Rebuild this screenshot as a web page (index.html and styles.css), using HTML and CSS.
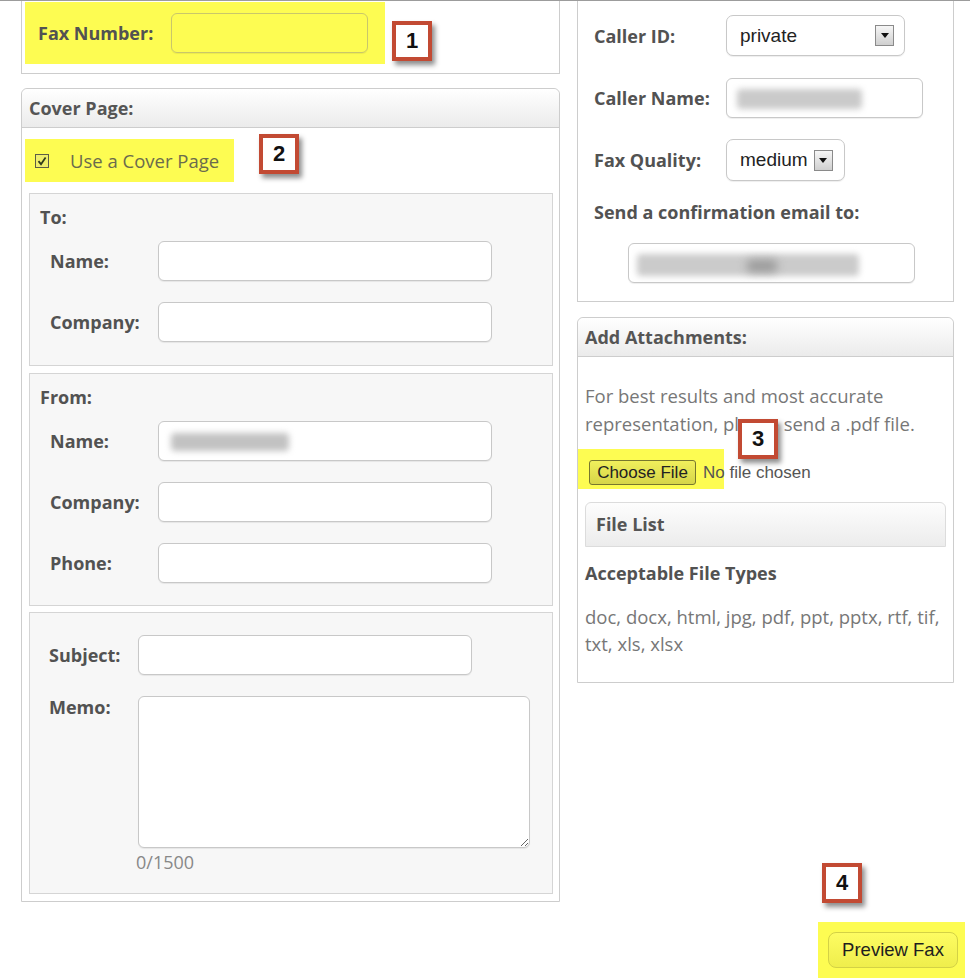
FILE: index.html
```html
<!DOCTYPE html>
<html>
<head>
<meta charset="utf-8">
<link rel="stylesheet" href="styles.css">
</head>
<body>
<div class="page">
  <div class="topline"></div>
  <div class="columns">
    <div class="left">
      <div class="panel fax-panel">
        <div class="hl fax-hl">
          <span class="lbl fax-lbl on-hl">Fax Number:</span>
          <input class="field fax-field" type="text">
        </div>
      </div>

      <div class="panel cover">
        <div class="panel-head">Cover Page:</div>
        <div class="cover-body">
          <div class="hl cb-hl">
            <svg class="cb" width="14" height="14" viewBox="0 0 14 14">
              <rect x="0.5" y="0.5" width="13" height="13" fill="#efee6a" stroke="#5d5d46"/>
              <path d="M3.5 7.2 L6 10.2 L10.6 3.6" fill="none" stroke="#2f3b1a" stroke-width="1.8"/>
            </svg>
            <span class="cb-text">Use a Cover Page</span>
          </div>

          <div class="sub">
            <div class="sub-title">To:</div>
            <div class="row"><span class="lbl w108">Name:</span><input class="field w334" type="text"></div>
            <div class="row"><span class="lbl w108">Company:</span><input class="field w334" type="text"></div>
          </div>

          <div class="sub from-sub">
            <div class="sub-title">From:</div>
            <div class="row"><span class="lbl w108">Name:</span><div class="field w334 fake"><span class="blur blur-name"></span></div></div>
            <div class="row"><span class="lbl w108">Company:</span><input class="field w334" type="text"></div>
            <div class="row"><span class="lbl w108">Phone:</span><input class="field w334" type="text"></div>
          </div>

          <div class="sub memo-sub">
            <div class="row"><span class="lbl w89">Subject:</span><input class="field w334" type="text"></div>
            <div class="row top"><span class="lbl w89 memo-lbl">Memo:</span><textarea class="field memo"></textarea></div>
            <div class="counter">0/1500</div>
          </div>
        </div>
      </div>
    </div>

    <div class="right">
      <div class="panel opts">
        <div class="row opt-row first"><span class="lbl w132">Caller ID:</span>
          <div class="select sel-id"><span>private</span><span class="arrow"><i></i></span></div>
        </div>
        <div class="row opt-row r2"><span class="lbl w132">Caller Name:</span>
          <div class="field fake cname"><span class="blur blur-cname"></span></div>
        </div>
        <div class="row opt-row r3"><span class="lbl w132">Fax Quality:</span>
          <div class="select sel-q"><span>medium</span><span class="arrow"><i></i></span></div>
        </div>
        <div class="lbl confirm">Send a confirmation email to:</div>
        <div class="field fake email"><span class="blur blur-email"></span><span class="blur blur-email2"></span></div>
      </div>

      <div class="panel attach">
        <div class="panel-head">Add Attachments:</div>
        <div class="attach-body">
          <p class="note">For best results and most accurate representation, please send a .pdf file.</p>
          <div class="hl file-hl">
            <span class="file-btn">Choose File</span><span class="nofile">No file chosen</span>
          </div>
          <div class="filelist">File List</div>
          <div class="lbl types-title">Acceptable File Types</div>
          <p class="types">doc, docx, html, jpg, pdf, ppt, pptx, rtf, tif, txt, xls, xlsx</p>
        </div>
      </div>
    </div>
  </div>

  <div class="footer">
    <div class="hl preview-hl"><span class="preview-btn">Preview Fax</span></div>
  </div>

  <div class="badge b1">1</div>
  <div class="badge b2">2</div>
  <div class="badge b3">3</div>
  <div class="badge b4">4</div>
</div>
</body>
</html>
```

FILE: styles.css
```css
* { box-sizing: border-box; }
html, body { margin: 0; padding: 0; background: #fff; }
body { font-family: "Open Sans", "Liberation Sans", sans-serif; font-size: 18px; color: #555; }

.page { position: relative; width: 970px; height: 978px; overflow: hidden; }
.topline { height: 1px; background: #9c9c9c; }

.columns { display: flex; align-items: flex-start; gap: 17px; padding-left: 21px; }
.left { width: 539px; }
.right { width: 377px; }

.panel { border: 1px solid #cdcdcd; background: #fff; }
.panel-head {
  height: 39px; line-height: 38px; padding-left: 7px;
  font-weight: 700; font-size: 18px; color: #555;
  background: linear-gradient(#ffffff, #ebebeb);
  border-bottom: 1px solid #cdcdcd;
  border-radius: 6px 6px 0 0;
}

.hl { background: #fdfc52; }
.on-hl { color: #4f4f3c; }

.lbl { font-weight: 700; font-size: 18px; color: #525252; line-height: 24px; white-space: nowrap; }

.field {
  display: block; border: 1px solid #c8c8c8; border-radius: 6px; background: #fff;
  box-shadow: 0 1px 1px rgba(0,0,0,0.07); font-family: "Liberation Sans", sans-serif; font-size: 16px;
  outline: none; margin: 0; padding: 0;
}
.fake { position: relative; overflow: hidden; }
.w334 { width: 334px; height: 40px; }
.w108 { width: 108px; flex: none; }
.w89 { width: 89px; flex: none; }
.w132 { width: 132px; flex: none; }

/* fax */
.fax-panel { border-top: none; height: 73px; padding: 1px 0 0 3px; }
.fax-hl { width: 360px; height: 62px; display: flex; align-items: center; padding-left: 13px; }
.fax-lbl { width: 133px; flex: none; }
.fax-field { width: 197px; height: 40px; background: transparent; border-color: #c9c76a; }

/* cover */
.cover { margin-top: 14px; border-radius: 6px 6px 0 0; }
.cover-body { padding: 0 6px 7px 7px; }
.cb-hl { margin: 11px 0 0 -4px; width: 209px; height: 43px; display: flex; align-items: center; padding-left: 10px; }
.cb { flex: none; }
.cb-text { margin-left: 21px; font-size: 18.5px; color: #6b6b4d; }

.sub { border: 1px solid #d5d5d5; background: #f7f7f7; padding: 11px 10px 23px 10px; margin-top: 7px; }
.cb-hl + .sub { margin-top: 11px; }
.from-sub { padding-bottom: 22px; }
.sub-title { font-weight: 700; font-size: 18px; line-height: 24px; color: #525252; margin-bottom: 12px; }
.row { display: flex; align-items: center; }
.sub .row { margin-left: 10px; }
.sub .row + .row { margin-top: 21px; }
.row.top { align-items: flex-start; }

.memo-sub { margin-top: 6px; padding: 22px 10px 19px 9px; }
.memo-lbl { line-height: 22px; }
.memo { width: 392px; height: 152px; resize: both; }
.counter { margin: 2px 0 0 97px; line-height: 24px; font-size: 18px; color: #888; }

.blur { position: absolute; background: #b9b9b9; filter: blur(3px); border-radius: 4px; }
.blur-name { left: 12px; top: 11px; width: 118px; height: 18px; background: #c2c2c2; }

/* right options */
.opts { border-top: none; padding: 14px 0 18px 16px; }
.opt-row.r2 { margin-top: 22px; }
.opt-row.r3 { margin-top: 21px; }
.select {
  display: flex; align-items: center; border: 1px solid #c8c8c8; border-radius: 7px; background: #fff;
  box-shadow: 0 1px 1px rgba(0,0,0,0.07);
  font-family: "Liberation Sans", Arial, sans-serif; font-size: 19px; color: #222;
  padding-left: 13px;
}
.sel-id { width: 179px; height: 41px; }
.sel-q { width: 119px; height: 42px; }
.arrow {
  margin-left: auto; margin-right: 10px; width: 19px; height: 21px;
  border: 1px solid #8a8a8a; background: linear-gradient(#f6f6f6, #cfcfcf);
  display: flex; align-items: center; justify-content: center;
}
.sel-q .arrow { margin-left: 6px; }
.arrow i { display: block; width: 0; height: 0; border-left: 4px solid transparent; border-right: 4px solid transparent; border-top: 5px solid #111; }
.cname { width: 197px; height: 40px; }
.blur-cname { left: 10px; top: 10px; width: 125px; height: 20px; background: #cacaca; }
.confirm { margin-top: 19px; }
.email { width: 287px; height: 40px; margin: 19px 0 0 34px; }
.blur-email { left: 8px; top: 10px; width: 222px; height: 22px; background: #cbcbcb; }
.blur-email2 { left: 118px; top: 16px; width: 30px; height: 12px; background: #999; filter: blur(5px); }

/* attachments */
.attach { margin-top: 15px; border-radius: 6px 6px 0 0; }
.attach-body { padding: 0 7px 25px 7px; }
.note { margin: 25px 0 0; line-height: 28px; font-size: 18.5px; color: #777; }
.file-hl {
  margin: 11px 0 0 -7px; width: 146px; height: 40px; padding: 11px 0 0 11px;
  display: flex; align-items: flex-start; white-space: nowrap;
}
.file-btn {
  flex: none; width: 107px; height: 25px; border: 1px solid #77772e; border-radius: 3px;
  background: linear-gradient(#f0ef5c, #d6d548);
  font-family: "Liberation Sans", Arial, sans-serif; font-size: 17px; color: #222;
  display: flex; align-items: center; justify-content: center;
}
.nofile { margin-left: 7px; margin-top: 3px; font-family: "Liberation Sans", Arial, sans-serif; font-size: 17px; color: #555; }
.filelist {
  margin-top: 13px; height: 45px; border: 1px solid #dcdcdc; border-radius: 6px 6px 0 0;
  background: linear-gradient(#fdfdfd, #ececec); font-weight: 700; font-size: 18px; color: #555;
  padding-left: 10px; line-height: 43px;
}
.types-title { display: block; margin-top: 14px; }
.types { margin: 18px 0 0; line-height: 27px; font-size: 18.5px; color: #777; }

/* footer */
.footer { display: flex; justify-content: flex-end; padding-right: 5px; margin-top: 20px; }
.preview-hl { width: 147px; height: 56px; padding: 10px 0 0 10px; }
.preview-btn {
  display: flex; align-items: center; justify-content: center;
  width: 130px; height: 36px; border: 1px solid #d3d146; border-radius: 8px;
  background: linear-gradient(#fdfc62, #efee4c);
  font-family: "Liberation Sans", Arial, sans-serif; font-size: 18.5px; color: #1e1e1e;
}

/* annotation badges */
.badge {
  position: absolute; width: 40px; height: 40px; border: 4px solid #c24a33; background: #fff;
  box-shadow: 3px 4px 5px rgba(0,0,0,0.45);
  font-family: "Liberation Sans", Arial, sans-serif; font-weight: 700; font-size: 22px; color: #111;
  display: flex; align-items: center; justify-content: center;
}
.b1 { left: 392px; top: 21px; }
.b2 { left: 259px; top: 134px; }
.b3 { left: 738px; top: 419px; }
.b4 { left: 822px; top: 863px; }
```
